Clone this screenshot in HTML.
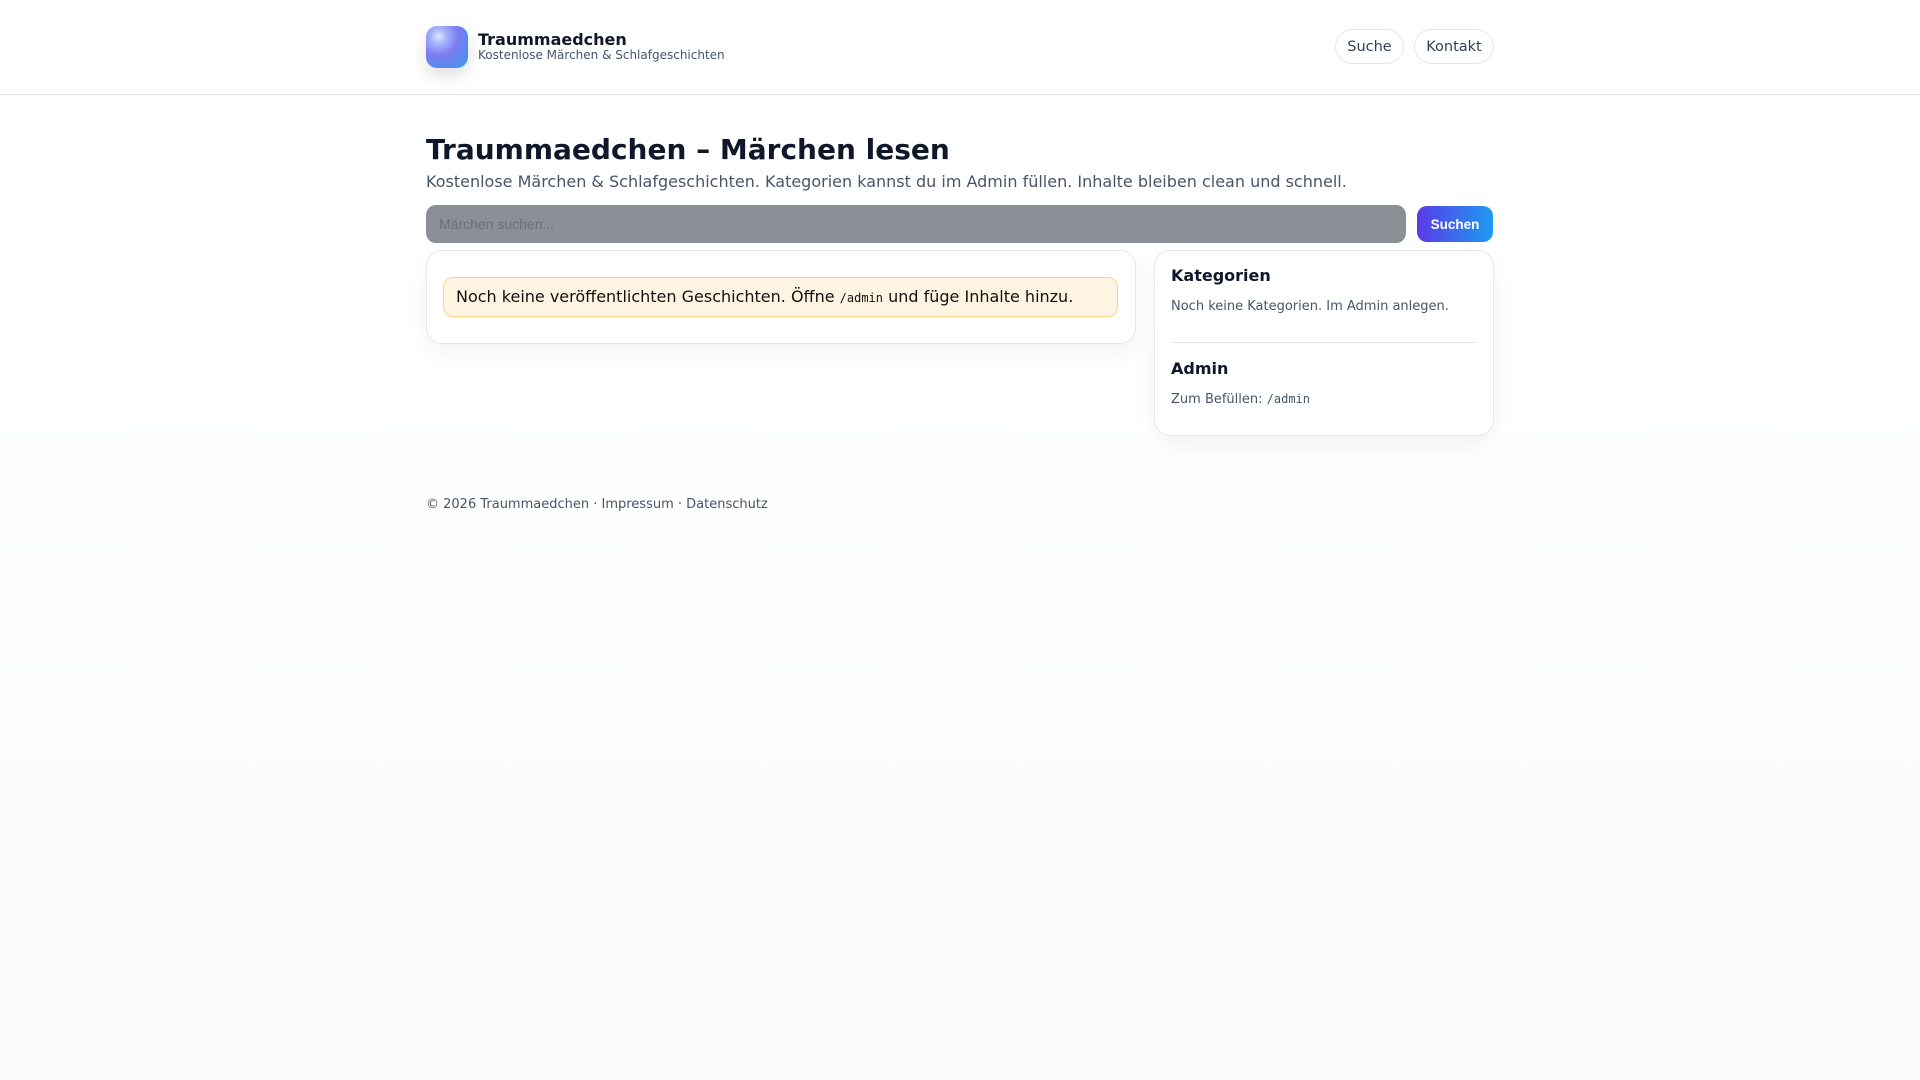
<!DOCTYPE html>
<html><head><meta charset="utf-8"><style>
*{box-sizing:border-box;margin:0;padding:0}
body{width:1920px;height:1080px;background:linear-gradient(#ffffff 0,#ffffff 400px,#f8fafc 900px);font-family:"DejaVu Sans","Liberation Sans",sans-serif;color:#0f172a;position:relative;overflow:hidden}
.hdr{position:absolute;left:0;top:0;width:1920px;height:95px;background:#fff;border-bottom:1px solid #e5e7eb}
.logo{position:absolute;left:426px;top:26px;width:42px;height:42px;border-radius:11px;background:radial-gradient(circle at 30% 25%,#e0e7ff 0,#a5b4fc 18%,#7c7cf0 45%,#4f8df0 80%,#3ba0f0 100%);box-shadow:0 8px 16px rgba(0,0,0,.12)}
.bt{position:absolute;left:478px;top:30px;font-size:16px;font-weight:bold}
.bs{position:absolute;left:478px;top:48px;font-size:12px;color:#475569}
.nav{position:absolute;top:29px;height:35px;border:1px solid #e5e7eb;border-radius:18px;font-size:14.5px;color:#334155;line-height:35px;text-align:center;background:#fff}
h1{position:absolute;left:426px;top:133px;font-size:28px;font-weight:bold}
.sub{position:absolute;left:426px;top:172px;font-size:16px;color:#475569}
.search{position:absolute;left:426px;top:205px;width:980px;height:38px;border-radius:10px;background:#8b8f96;font-size:14px;color:#6b6f76;padding:11px 13px;font-family:"Liberation Sans",sans-serif}
.btn{position:absolute;left:1417px;top:206px;width:76px;height:36px;border-radius:10px;background:linear-gradient(90deg,#5b3be8,#1d9bf0);color:#fff;font-weight:bold;font-size:13.5px;text-align:center;line-height:37px;font-family:"Liberation Sans",sans-serif}
.card{position:absolute;background:#fff;border:1px solid #e5e7eb;border-radius:16px;box-shadow:0 10px 25px rgba(15,23,42,.05)}
.alert{position:absolute;left:443px;top:277px;width:675px;height:40px;border:1px solid #fcd581;background:#fff4e2;border-radius:10px;font-size:16px;padding:9px 12px;color:#111}
code{font-family:"DejaVu Sans Mono",monospace;font-size:12px}
.h3{position:absolute;left:1171px;font-size:16px;font-weight:bold}
.t{position:absolute;left:1171px;font-size:13px;color:#475569}
.foot{position:absolute;left:426px;top:497px;font-size:13px;color:#475569}
</style></head><body>
<div class="hdr">
<div class="logo"></div>
<div class="bt">Traummaedchen</div>
<div class="bs">Kostenlose Märchen &amp; Schlafgeschichten</div>
<div class="nav" style="left:1335px;width:69px">Suche</div>
<div class="nav" style="left:1414px;width:80px">Kontakt</div>
</div>
<h1>Traummaedchen – Märchen lesen</h1>
<div class="sub">Kostenlose Märchen &amp; Schlafgeschichten. Kategorien kannst du im Admin füllen. Inhalte bleiben clean und schnell.</div>
<div class="search">Märchen suchen...</div>
<div class="btn">Suchen</div>
<div class="card" style="left:426px;top:250px;width:710px;height:94px"></div>
<div class="alert">Noch keine veröffentlichten Geschichten. Öffne <code>/admin</code> und füge Inhalte hinzu.</div>
<div class="card" style="left:1154px;top:250px;width:340px;height:186px"></div>
<div class="h3" style="top:266px">Kategorien</div>
<div class="t" style="top:299px">Noch keine Kategorien. Im Admin anlegen.</div>
<div style="position:absolute;left:1171px;top:342px;width:306px;height:1px;background:#e2e8f0"></div>
<div class="h3" style="top:359px">Admin</div>
<div class="t" style="top:392px">Zum Befüllen: <code>/admin</code></div>
<div class="foot">© 2026 Traummaedchen · Impressum · Datenschutz</div>
</body></html>
